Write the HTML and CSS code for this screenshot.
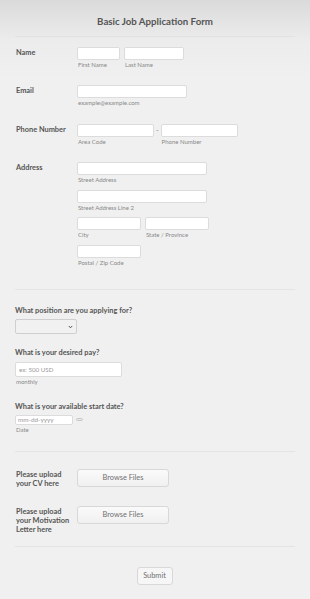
FILE: index.html
```html
<!DOCTYPE html>
<html lang="en">
<head>
  <meta charset="UTF-8">
  <meta name="viewport" content="width=device-width, initial-scale=1.0">
  <title>Basic Job Application Form</title>
  <link rel="stylesheet" href="styles.css">
</head>
<body>
  <form class="form">
    <!-- Header -->
    <div class="form-header">
      <h1>Basic Job Application Form</h1>
    </div>

    <!-- Contact details -->
    <div class="row row-name">
      <label class="row-label">Name</label>
      <div class="row-fields">
        <div class="field">
          <input class="input w-first" type="text">
          <span class="sub">First Name</span>
        </div>
        <div class="field">
          <input class="input w-last" type="text">
          <span class="sub">Last Name</span>
        </div>
      </div>
    </div>

    <div class="row row-email">
      <label class="row-label">Email</label>
      <div class="row-fields">
        <div class="field">
          <input class="input w-email" type="text">
          <span class="sub">example@example.com</span>
        </div>
      </div>
    </div>

    <div class="row row-phone">
      <label class="row-label">Phone Number</label>
      <div class="row-fields">
        <div class="field">
          <input class="input w-phone" type="text">
          <span class="sub">Area Code</span>
        </div>
        <span class="dash">-</span>
        <div class="field">
          <input class="input w-phone" type="text">
          <span class="sub">Phone Number</span>
        </div>
      </div>
    </div>

    <div class="row row-address">
      <label class="row-label">Address</label>
      <div class="address">
        <div class="field">
          <input class="input w-street" type="text">
          <span class="sub">Street Address</span>
        </div>
        <div class="field">
          <input class="input w-street" type="text">
          <span class="sub">Street Address Line 2</span>
        </div>
        <div class="row-fields">
          <div class="field">
            <input class="input w-city" type="text">
            <span class="sub">City</span>
          </div>
          <div class="field">
            <input class="input w-city" type="text">
            <span class="sub">State / Province</span>
          </div>
        </div>
        <div class="field">
          <input class="input w-city" type="text">
          <span class="sub">Postal / Zip Code</span>
        </div>
      </div>
    </div>

    <hr class="divider div-1">

    <!-- Questions -->
    <div class="question q-position">
      <label class="q-label">What position are you applying for?</label>
      <div class="select-wrap">
        <select class="select"><option></option></select>
        <svg class="chevron" width="5" height="4" viewBox="0 0 5 4"><path d="M0.8 1 L2.5 2.8 L4.2 1" fill="none" stroke="#555" stroke-width="1"/></svg>
      </div>
    </div>

    <div class="question q-pay">
      <label class="q-label">What is your desired pay?</label>
      <input class="input w-pay" type="text" placeholder="ex: 500 USD">
      <span class="sub">monthly</span>
    </div>

    <div class="question q-date">
      <label class="q-label">What is your available start date?</label>
      <div class="date-line">
        <input class="input w-date" type="text" placeholder="mm-dd-yyyy">
        <span class="cal"></span>
      </div>
      <span class="sub">Date</span>
    </div>

    <hr class="divider div-2">

    <!-- Uploads -->
    <div class="upload up-cv">
      <label class="up-label">Please upload your CV here</label>
      <button type="button" class="browse">Browse Files</button>
    </div>
    <div class="upload up-letter">
      <label class="up-label">Please upload your Motivation Letter here</label>
      <button type="button" class="browse">Browse Files</button>
    </div>

    <hr class="divider div-3">

    <div class="actions">
      <button type="button" class="submit">Submit</button>
    </div>
  </form>
</body>
</html>
```

FILE: styles.css
```css
/* Reset */
* {
  margin: 0;
  padding: 0;
  box-sizing: border-box;
}

body {
  font-family: 'Lato', 'Open Sans', sans-serif;
  background: linear-gradient(180deg, #dadada 0, #ececec 40px, #f0f0f0 80px) no-repeat #f0f0f0;
  color: #555;
  width: 310px;
  min-height: 599px;
}

.form {
  padding: 0 15px;
}

/* Header */
.form-header {
  height: 37px;
  border-bottom: 1px solid #e2e2e2;
  display: flex;
  align-items: center;
  justify-content: center;
  padding-top: 5px;
}

.form-header h1 {
  font-size: 9.7px;
  font-weight: bold;
  color: #555;
}

/* Labelled rows */
.row {
  display: flex;
  align-items: flex-start;
}

.row-label {
  width: 62px;
  padding-left: 1px;
  font-size: 7.4px;
  font-weight: bold;
  line-height: 12px;
  color: #555;
}

.row-fields {
  display: flex;
  gap: 4px;
}

.field {
  display: flex;
  flex-direction: column;
}

.address {
  display: flex;
  flex-direction: column;
  gap: 4.5px;
}

.row-name { margin-top: 10px; }
.row-email { margin-top: 15px; }
.row-phone { margin-top: 16px; }
.row-address { margin-top: 15px; }

.input {
  height: 13px;
  background: #fff;
  border: 1px solid #dcdcdc;
  border-radius: 2px;
  font-family: inherit;
  font-size: 6.2px;
  padding: 0 3px;
  color: #555;
  outline: none;
}

.input::placeholder {
  color: #999;
}

.w-first { width: 43px; }
.w-last { width: 60px; }
.w-email { width: 110px; }
.w-phone { width: 77px; }
.w-street { width: 130px; }
.w-city { width: 64px; }
.w-pay { width: 107px; height: 15px; }
.w-date { width: 58px; height: 10px; font-size: 6.4px; padding: 0 2px; }

.sub {
  font-size: 6px;
  line-height: 10px;
  color: #888;
  padding-left: 1px;
}

.dash {
  font-size: 7px;
  line-height: 13px;
  color: #888;
  margin: 0 -2px;
}

/* Dividers */
.divider {
  border: none;
  border-top: 1px solid #e4e4e4;
}

.div-1 { margin-top: 21px; }
.div-2 { margin-top: 16px; }
.div-3 { margin-top: 12px; }

/* Questions */
.question {
  display: flex;
  flex-direction: column;
  align-items: flex-start;
}

.q-label {
  font-size: 7.4px;
  font-weight: bold;
  line-height: 10px;
  color: #555;
  margin-bottom: 3px;
}

.q-position { margin-top: 16px; }
.q-pay { margin-top: 14px; }
.q-pay .q-label { margin-bottom: 4px; }
.q-date { margin-top: 15px; }

.select-wrap {
  position: relative;
}

.select {
  display: block;
  width: 62px;
  height: 15px;
  appearance: none;
  background: #f1f1f1;
  border: 1px solid #cfcfcf;
  border-radius: 2px;
  outline: none;
}

.chevron {
  position: absolute;
  right: 4px;
  top: 6px;
}

.date-line {
  display: flex;
  align-items: center;
  gap: 3px;
}

.cal {
  width: 7px;
  height: 3px;
  border: 1px solid #c8c8c8;
  border-radius: 2px;
  background: #e6e6e6;
}

/* Uploads */
.upload {
  display: flex;
  align-items: flex-start;
}

.up-label {
  width: 62px;
  padding-left: 1px;
  padding-right: 4px;
  font-size: 7.4px;
  font-weight: bold;
  line-height: 9px;
  color: #555;
  margin-top: 1px;
}

.browse {
  width: 92px;
  height: 18px;
  background: linear-gradient(180deg, #fafafa, #f0f0f0);
  border: 1px solid #d8d8d8;
  border-radius: 3px;
  font-family: inherit;
  font-size: 7.4px;
  color: #707070;
}

.up-cv { margin-top: 17px; }
.up-letter { margin-top: 18px; }

/* Submit */
.actions {
  display: flex;
  justify-content: center;
  margin-top: 20px;
}

.submit {
  width: 36px;
  height: 18px;
  background: #f6f6f6;
  border: 1px solid #d8d8d8;
  border-radius: 3px;
  font-family: inherit;
  font-size: 7.4px;
  color: #707070;
  margin-left: -1px;
}
```
